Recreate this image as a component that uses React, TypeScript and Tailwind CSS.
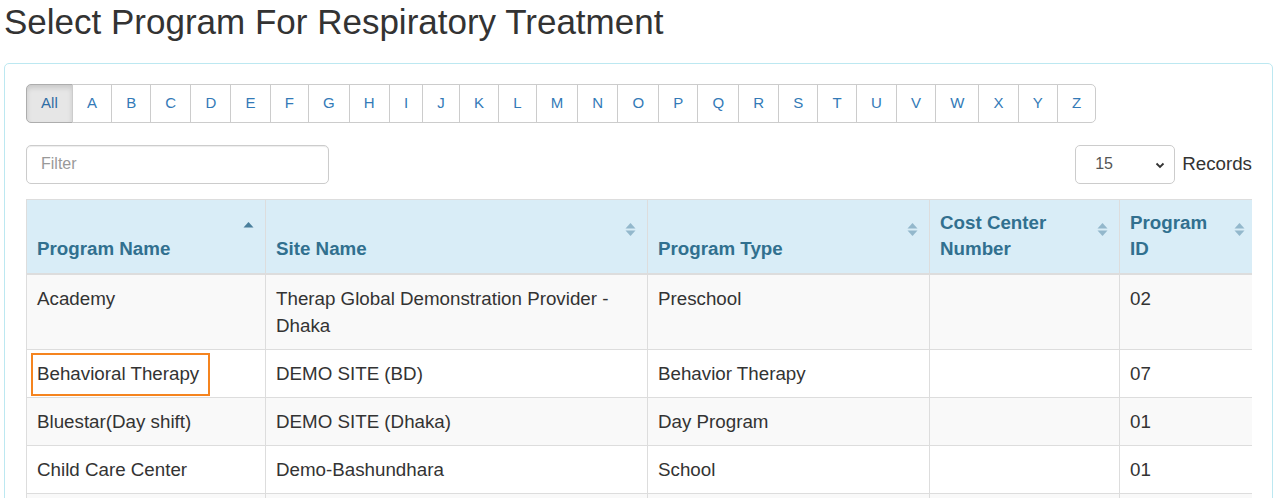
import React from 'react';

const letters = ['All', 'A', 'B', 'C', 'D', 'E', 'F', 'G', 'H', 'I', 'J', 'K', 'L', 'M', 'N', 'O', 'P', 'Q', 'R', 'S', 'T', 'U', 'V', 'W', 'X', 'Y', 'Z'];

interface Program {
  name: string;
  site: string;
  type: string;
  costCenter: string;
  id: string;
  highlight?: boolean;
}

const programs: Program[] = [
  { name: 'Academy', site: 'Therap Global Demonstration Provider - Dhaka', type: 'Preschool', costCenter: '', id: '02' },
  { name: 'Behavioral Therapy', site: 'DEMO SITE (BD)', type: 'Behavior Therapy', costCenter: '', id: '07', highlight: true },
  { name: 'Bluestar(Day shift)', site: 'DEMO SITE (Dhaka)', type: 'Day Program', costCenter: '', id: '01' },
  { name: 'Child Care Center', site: 'Demo-Bashundhara', type: 'School', costCenter: '', id: '01' },
  { name: 'Community Living', site: 'DEMO SITE (BD)', type: 'Residential', costCenter: '', id: '03' },
];

function SortIcon({ active }: { active?: boolean }) {
  if (active) {
    return (
      <svg width="11" height="15" viewBox="0 0 11 15" className="absolute right-[11px] top-[21px]">
        <path d="M0.5 6.5 L5.5 1 L10.5 6.5 Z" fill="#4a7f9c" />
      </svg>
    );
  }
  return (
    <svg width="11" height="15" viewBox="0 0 11 15" className="absolute right-[11px] top-[22px]">
      <path d="M0.5 6.5 L5.5 1 L10.5 6.5 Z" fill="#93b8cc" />
      <path d="M0.5 8.5 L5.5 14 L10.5 8.5 Z" fill="#93b8cc" />
    </svg>
  );
}

const headers = [
  { label: 'Program Name', active: true },
  { label: 'Site Name' },
  { label: 'Program Type' },
  { label: 'Cost Center Number' },
  { label: 'Program ID' },
];

export default function App() {
  return (
    <div className="min-h-screen bg-white pl-[4px] pr-[5px] text-[#333]" style={{ fontFamily: '"Liberation Sans", Arial, sans-serif' }}>
      <h1 className="pt-[3px] text-[35px] leading-[38.5px] font-normal">Select Program For Respiratory Treatment</h1>

      <div className="mt-[21px] rounded-[5px] border border-[#bce8f1] pl-[21px] pr-[20px] pt-[20px]">
        <div className="flex">
          {letters.map((l, i) => (
            <button
              key={l}
              className={`h-[39px] border px-[14.1px] text-[15px] ${i > 0 ? '-ml-px' : ''} ${i === 0 ? 'rounded-l-[5px] border-[#adadad] bg-[#e6e6e6] text-[#2e6da4] shadow-[inset_0_3px_5px_rgba(0,0,0,0.125)]' : 'border-[#ccc] bg-white text-[#337ab7]'} ${i === letters.length - 1 ? 'rounded-r-[5px]' : ''}`}
            >
              {l}
            </button>
          ))}
        </div>

        <div className="mt-[22px] flex items-center justify-between">
          <input
            placeholder="Filter"
            className="h-[39px] w-[303px] rounded-[5px] border border-[#ccc] px-[14px] text-[16px] text-[#555] placeholder:text-[#999] shadow-[inset_0_1px_1px_rgba(0,0,0,0.075)] outline-none"
          />
          <div className="flex items-center gap-[7px]">
            <div className="relative">
              <select className="h-[39px] w-[100px] appearance-none rounded-[5px] border border-[#ccc] bg-white pl-[19px] text-[16px] text-[#555]">
                <option>15</option>
                <option>25</option>
                <option>50</option>
              </select>
              <svg width="10" height="7" viewBox="0 0 10 7" className="pointer-events-none absolute right-[10px] top-[17px]">
                <path d="M1.5 1.5 L5 5 L8.5 1.5" fill="none" stroke="#333" strokeWidth="1.8" />
              </svg>
            </div>
            <span className="text-[18.75px]">Records</span>
          </div>
        </div>

        <div className="mt-[15px] overflow-hidden">
          <table className="w-[1230px] table-fixed border-collapse text-[18.75px] leading-[27px]">
            <colgroup>
              <col className="w-[239px]" />
              <col className="w-[382px]" />
              <col className="w-[282px]" />
              <col className="w-[190px]" />
              <col className="w-[137px]" />
            </colgroup>
            <thead>
              <tr className="bg-[#d9edf7]">
                {headers.map((h) => (
                  <th
                    key={h.label}
                    className="relative border border-b-2 border-[#ddd] p-[10px] pr-[32px] text-left align-bottom font-bold leading-[26.8px] text-[#31708f]"
                  >
                    {h.label}
                    <SortIcon active={h.active} />
                  </th>
                ))}
              </tr>
            </thead>
            <tbody>
              {programs.map((p, i) => (
                <tr key={p.name} className={i % 2 === 0 ? 'bg-[#f9f9f9]' : 'bg-white'}>
                  <td className="relative border border-[#ddd] p-[10px] align-top">
                    {p.name}
                    {p.highlight && (
                      <span className="absolute left-[4px] top-[3px] h-[43px] w-[179px] border-2 border-[#f5841f]" />
                    )}
                  </td>
                  <td className="border border-[#ddd] p-[10px] align-top">{p.site}</td>
                  <td className="border border-[#ddd] p-[10px] align-top">{p.type}</td>
                  <td className="border border-[#ddd] p-[10px] align-top">{p.costCenter}</td>
                  <td className="border border-[#ddd] p-[10px] align-top">{p.id}</td>
                </tr>
              ))}
            </tbody>
          </table>
        </div>
      </div>
    </div>
  );
}
